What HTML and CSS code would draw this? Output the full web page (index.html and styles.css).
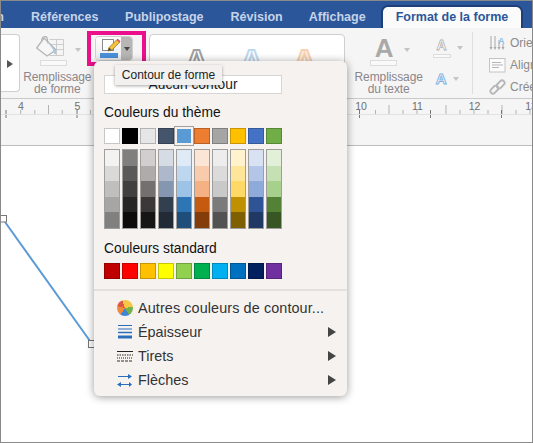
FILE: index.html
```html
<!DOCTYPE html>
<html lang="fr">
<head>
<meta charset="utf-8">
<title>Contour de forme</title>
<link rel="stylesheet" href="styles.css">
</head>
<body>
<div class="app">
  <nav class="tabs">
    <span class="tab tab-clip"><span>n</span></span>
    <span class="tab tab-ref">Références</span>
    <span class="tab tab-pub">Publipostage</span>
    <span class="tab tab-rev">Révision</span>
    <span class="tab tab-aff">Affichage</span>
    <span class="tab tab-active">Format de la forme</span>
  </nav>

  <section class="ribbon">
    <div class="gallery-end"><span class="play"></span></div>

    <div class="group fill-group">
      <div class="icon-row">
        <svg class="bucket" width="30" height="24" viewBox="0 0 30 24">
          <path d="M13.500 3.500h14v16h-14M13.500 8.500h14M13.500 13.500h14M20.500 3.500v16" fill="none" stroke="#cdcdcd"/>
          <path d="M.7 12 8 2l12 12-9 6z" fill="#f6f6f6" stroke="#b5b5b5" stroke-width="1.300"/>
          <path d="M6 5C5 1 9-.5 11 1.500l1 6" fill="none" stroke="#b5b5b5" stroke-width="1.200"/>
          <path d="M13 8l6 5.500c1.500 2 1.500 4 .5 5-2-.5-2.500-3-2.500-5z" fill="#a9c8e6"/>
        </svg>
        <span class="caret caret-fill"></span>
      </div>
      <span class="bar bar-fill"></span>
      <span class="label">Remplissage<br>de forme</span>
    </div>

    <div class="contour-btn">
      <span class="contour-main">
        <svg width="22" height="22" viewBox="0 0 22 22">
          <rect x="2.500" y="1.500" width="11" height="11" fill="#fff" stroke="#8a8a8a"/>
          <path d="M8 13l1-3.500L17 1.500l3 2.500-8 8z" fill="#f5c33b" stroke="#8c6d1f" stroke-width=".7"/>
          <path d="M16.500 2l1.300-1.200 2.700 2.400-1.200 1.300z" fill="#d9546e"/>
          <path d="M8 13l1-3.500 2.500 2.300z" fill="#4a4a4a"/>
          <rect x="0" y="15" width="18" height="5" fill="#4a90d9"/>
        </svg>
      </span>
      <span class="contour-drop"><span class="caret caret-dark"></span></span>
    </div>

    <div class="gallery">
      <span class="big-a a-grey">A</span>
      <span class="big-a a-blue">A</span>
      <span class="big-a a-orange">A</span>
    </div>

    <div class="group text-group">
      <div class="icon-row">
        <span class="text-a">A</span>
        <span class="caret caret-text"></span>
      </div>
      <span class="bar bar-text"></span>
      <span class="label">Remplissage<br>du texte</span>
    </div>

    <div class="small-col">
      <div class="small-top">
        <div class="small-stack">
          <span class="mini-a mini-grey">A</span>
          <span class="bar bar-mini"></span>
        </div>
        <span class="caret"></span>
      </div>
      <div class="small-bottom">
        <span class="mini-a mini-blue">A</span>
        <span class="caret"></span>
      </div>
    </div>

    <div class="cmds">
      <div class="cmd cmd-first">
        <svg width="17" height="16" viewBox="0 0 17 16">
          <path d="M2 1v12M6 1v12M10 5v8M14 9v4" stroke="#a8a8a8" fill="none"/>
          <path d="M.5 12l1.500 3 1.500-3zM4.500 12l1.500 3 1.500-3zM8.500 12l1.500 3 1.500-3zM12.500 12l1.500 3 1.500-3z" fill="#a8a8a8"/>
          <text x="9" y="9" class="orient-a">A</text>
        </svg>
        <span>Orientation</span>
      </div>
      <div class="cmd">
        <svg width="17" height="15" viewBox="0 0 17 15">
          <rect x=".5" y=".5" width="15.500" height="13.500" fill="#fbfbfb" stroke="#c4c4c4"/>
          <path d="M3 4.500h9M3 7h11M3 9.500h7" stroke="#b5b5b5" fill="none"/>
        </svg>
        <span>Aligner le texte</span>
      </div>
      <div class="cmd">
        <svg width="17" height="16" viewBox="0 0 17 16">
          <g fill="none" stroke="#b5b5b5" stroke-width="1.800">
            <rect x="-4" y="-2.500" width="9" height="5" rx="2.500" transform="translate(5 11) rotate(-45)"/>
            <rect x="-5" y="-2.500" width="9" height="5" rx="2.500" transform="translate(12 5) rotate(-45)"/>
          </g>
        </svg>
        <span>Créer un lien</span>
      </div>
    </div>
  </section>

  <section class="ruler">
    <svg class="ruler-svg" width="531" height="20" viewBox="0 0 531 20">
      <path class="tick" d="M19.700 11v4M33.800 11v4M47.500 6v9M61.200 11v4M89.500 11v4M374.500 11v4M388 6v9M402 11v4M416 11v4M445 6v9M459 11v4M473 11v4M487 11v4M501 6v9M515 11v4M529 11v4"/>
      <path class="tab-tick" d="M5 11v8M76 11v8M358.500 11v8M429.500 11v8M500.500 11v8"/>
      <path class="base" d="M0 15.500h531"/>
      <text class="ruler-num" x="20" y="11">4</text>
      <text class="ruler-num" x="76.500" y="11">5</text>
      <text class="ruler-num" x="360" y="11">10</text>
      <text class="ruler-num" x="416.500" y="11">11</text>
      <text class="ruler-num" x="473.500" y="11">12</text>
      <text class="ruler-num" x="530" y="11">13</text>
    </svg>
  </section>

  <main class="canvas">
    <svg class="shape" width="100" height="140" viewBox="0 0 100 140">
      <path d="M4 8 89 127" stroke="#5b9bd5" stroke-width="2" fill="none"/>
      <rect x="-.5" y="1.500" width="6" height="6.500" fill="#fff" stroke="#777"/>
      <rect x="87.500" y="126.500" width="6" height="7" fill="#fff" stroke="#777"/>
    </svg>
  </main>

  <div class="highlight"></div>

  <div class="menu">
    <button class="none-btn">Aucun contour</button>

    <h3 class="heading heading-theme">Couleurs du thème</h3>
    <div class="swatches">
      <span class="swatch" style="background:#ffffff"></span>
      <span class="swatch" style="background:#000000"></span>
      <span class="swatch" style="background:#e7e6e6"></span>
      <span class="swatch" style="background:#44546a"></span>
      <span class="swatch selected" style="background:#5b9bd5"></span>
      <span class="swatch" style="background:#ed7d31"></span>
      <span class="swatch" style="background:#a5a5a5"></span>
      <span class="swatch" style="background:#ffc000"></span>
      <span class="swatch" style="background:#4472c4"></span>
      <span class="swatch" style="background:#70ad47"></span>
    </div>
    <div class="shades">
      <div class="col"><i style="background:#f2f2f2"></i><i style="background:#d9d9d9"></i><i style="background:#bfbfbf"></i><i style="background:#a6a6a6"></i><i style="background:#808080"></i></div>
      <div class="col"><i style="background:#7f7f7f"></i><i style="background:#595959"></i><i style="background:#404040"></i><i style="background:#262626"></i><i style="background:#0d0d0d"></i></div>
      <div class="col"><i style="background:#d0cece"></i><i style="background:#aeabab"></i><i style="background:#757070"></i><i style="background:#3a3838"></i><i style="background:#171616"></i></div>
      <div class="col"><i style="background:#d6dce4"></i><i style="background:#adb9ca"></i><i style="background:#8496b0"></i><i style="background:#323f4f"></i><i style="background:#222a35"></i></div>
      <div class="col"><i style="background:#deebf6"></i><i style="background:#bdd7ee"></i><i style="background:#9dc3e6"></i><i style="background:#2e75b5"></i><i style="background:#1e4e79"></i></div>
      <div class="col"><i style="background:#fbe5d5"></i><i style="background:#f7cbac"></i><i style="background:#f4b183"></i><i style="background:#c55a11"></i><i style="background:#843c0b"></i></div>
      <div class="col"><i style="background:#ededed"></i><i style="background:#dbdbdb"></i><i style="background:#c9c9c9"></i><i style="background:#7b7b7b"></i><i style="background:#525252"></i></div>
      <div class="col"><i style="background:#fff2cc"></i><i style="background:#fee599"></i><i style="background:#ffd965"></i><i style="background:#bf9000"></i><i style="background:#7f6000"></i></div>
      <div class="col"><i style="background:#d9e2f3"></i><i style="background:#b4c6e7"></i><i style="background:#8eaadb"></i><i style="background:#2f5496"></i><i style="background:#1f3864"></i></div>
      <div class="col"><i style="background:#e2efd9"></i><i style="background:#c5e0b3"></i><i style="background:#a8d08d"></i><i style="background:#538135"></i><i style="background:#375623"></i></div>
    </div>

    <h3 class="heading heading-std">Couleurs standard</h3>
    <div class="swatches">
      <span class="swatch" style="background:#c00000"></span>
      <span class="swatch" style="background:#ff0000"></span>
      <span class="swatch" style="background:#ffc000"></span>
      <span class="swatch" style="background:#ffff00"></span>
      <span class="swatch" style="background:#92d050"></span>
      <span class="swatch" style="background:#00b050"></span>
      <span class="swatch" style="background:#00b0f0"></span>
      <span class="swatch" style="background:#0070c0"></span>
      <span class="swatch" style="background:#002060"></span>
      <span class="swatch" style="background:#7030a0"></span>
    </div>

    <hr class="sep">

    <ul class="items">
      <li class="item">
        <span class="item-icon"><span class="wheel"></span></span>
        <span class="item-text item-wide">Autres couleurs de contour...</span>
      </li>
      <li class="item">
        <span class="item-icon">
          <svg width="16" height="16" viewBox="0 0 16 16"><path d="M1 1.500h14M1 5h14" stroke="#2a6ebb" fill="none"/><path d="M1 8.500h14" stroke="#2a6ebb" stroke-width="1.500" fill="none"/><path d="M1 13h14" stroke="#2a6ebb" stroke-width="3" fill="none"/></svg>
        </span>
        <span class="item-text">Épaisseur</span>
        <span class="arrow"></span>
      </li>
      <li class="item">
        <span class="item-icon">
          <svg width="16" height="12" viewBox="0 0 16 12"><path d="M0 1.500h16" stroke="#222" fill="none"/><path d="M0 5h16" stroke="#222" stroke-dasharray="1.500 1" fill="none"/><path d="M0 8h16" stroke="#222" stroke-dasharray="1 1" fill="none"/><path d="M0 11h16" stroke="#333" stroke-dasharray="3 1" fill="none"/></svg>
        </span>
        <span class="item-text">Tirets</span>
        <span class="arrow"></span>
      </li>
      <li class="item">
        <span class="item-icon">
          <svg width="16" height="15" viewBox="0 0 16 15"><path d="M1 3.500h13M2 11.500h12" stroke="#2a6ebb" fill="none"/><path d="M11 1l4 2.500-4 2.500zM4 9l-4 2.500 4 2.500zM12 9l3 2.500-3 2.500z" fill="#2a6ebb"/></svg>
        </span>
        <span class="item-text">Flèches</span>
        <span class="arrow"></span>
      </li>
    </ul>
  </div>

  <div class="tooltip">Contour de forme</div>
</div>
</body>
</html>
```

FILE: styles.css
```css
* { box-sizing: border-box; }
html, body { margin: 0; padding: 0; background: #fff; }
body { font-family: "Liberation Sans", Arial, sans-serif; }

.app {
  position: relative;
  width: 533px;
  height: 443px;
  border: 1px solid #8a8a8a;
  display: flex;
  flex-direction: column;
  overflow: hidden;
  background: #fff;
}

/* Tabs */
.tabs {
  flex: none;
  height: 27px;
  background: #2b579a;
  display: flex;
  align-items: flex-end;
  font-size: 12.5px;
  font-weight: bold;
  color: #c6d3e8;
}
.tab { display: block; height: 20px; line-height: 18px; white-space: nowrap; }
.tab-clip { width: 3px; display: flex; justify-content: flex-end; overflow: hidden; }
.tab-ref { margin-left: 27px; }
.tab-pub { margin-left: 26.7px; }
.tab-rev { margin-left: 27px; }
.tab-aff { margin-left: 26px; }
.tab-active {
  margin-left: 17.3px;
  width: 138px;
  height: 21px;
  line-height: 20px;
  text-align: center;
  background: #fbfbfb;
  color: #2b579a;
  border-radius: 5px 5px 0 0;
  box-shadow: 0 0 0 2px #1f3f78;
}

/* Ribbon */
.ribbon {
  flex: none;
  height: 71px;
  background: #f6f5f5;
  border-bottom: 1px solid #c9c9c9;
  display: flex;
  align-items: flex-start;
  padding-top: 6px;
  overflow: hidden;
  position: relative;
}
.gallery-end {
  width: 20px;
  height: 58px;
  background: #fff;
  border: 1px solid #cfcfcf;
  border-left: 0;
  border-radius: 0 4px 4px 0;
  display: flex;
  align-items: center;
  justify-content: center;
}
.play {
  width: 0;
  height: 0;
  border-left: 6px solid #555;
  border-top: 4px solid transparent;
  border-bottom: 4px solid transparent;
  margin-top: 2px;
}
.group { display: flex; flex-direction: column; align-items: center; }
.icon-row { display: flex; align-items: center; position: relative; }
.label {
  font-size: 12px;
  line-height: 12px;
  color: #8b868b;
  text-align: center;
  letter-spacing: -.1px;
}
.caret {
  display: block;
  width: 0;
  height: 0;
  border-top: 4px solid #c4c4c4;
  border-left: 3.5px solid transparent;
  border-right: 3.5px solid transparent;
}
.bar { display: block; border: 1px solid #dcdcdc; background: #f9f9f9; }

.fill-group { width: 68px; margin-left: 3px; }
.fill-group .icon-row { height: 24px; width: 60px; margin-top: 2px; }
.bucket { margin-left: 9px; flex: none; }
.caret-fill { margin-left: 9px; margin-top: 4px; }
.bar-fill { width: 27px; height: 6px; margin: 0 8px 5px 0; }

.contour-btn {
  margin-left: 4px;
  margin-top: 2px;
  width: 39px;
  height: 25px;
  display: flex;
  border: 1px solid #cfcfcf;
  border-radius: 4px;
  overflow: hidden;
}
.contour-main {
  width: 25px;
  padding: 1px 0 0 4px;
  background: linear-gradient(#fefefe, #ececec);
}
.contour-drop {
  flex: 1;
  background: #b7b6b4;
  display: flex;
  align-items: center;
  justify-content: center;
}
.caret-dark { border-top-color: #444; }

.gallery {
  margin-left: 16px;
  width: 202px;
  height: 58px;
  background: #fff;
  border: 1px solid #cfcfcf;
  border-radius: 4px;
  display: flex;
  padding: 7px 0 0 35px;
}
.big-a {
  font-size: 32px;
  line-height: 38px;
  font-weight: bold;
  color: transparent;
}
.a-grey { color: #fff; -webkit-text-stroke: 2px #a0a0a0; width: 55px; }
.a-blue { color: #fff; -webkit-text-stroke: 2px #bcd8ef; width: 53px; }
.a-orange { color: #fdeee2; -webkit-text-stroke: 2px #f8d0b0; }

.text-group { width: 66px; margin-left: 11px; }
.text-group .icon-row { height: 24px; width: 60px; margin-top: 2px; justify-content: flex-start; }
.text-a {
  font-size: 26px;
  font-weight: bold;
  line-height: 24px;
  color: #a9a9a9;
  margin-left: 16px;
}
.caret-text { margin-left: 11px; margin-top: 4px; }
.bar-text { width: 27px; height: 6px; margin: 0 11px 5px 0; }

.small-col { width: 44px; margin-left: 11px; }
.small-top { display: flex; align-items: flex-start; gap: 6px; }
.small-stack { display: flex; flex-direction: column; align-items: center; width: 18px; }
.small-top .caret { margin-top: 12px; }
.mini-a {
  font-size: 14px;
  font-weight: bold;
  line-height: 18px;
  color: #fff;
}
.mini-grey { -webkit-text-stroke: .8px #b5b5b5; margin-top: 2px; }
.mini-blue { -webkit-text-stroke: 1px #7fb4e3; font-size: 15px; margin-left: 3px; margin-right: 6px; }
.bar-mini { width: 18px; height: 4px; }
.small-bottom { display: flex; align-items: center; margin-top: 12px; }

.cmds {
  margin-left: -3px;
  align-self: stretch;
  margin-top: -2px;
  height: 62px;
  border-left: 1px solid #dedede;
  padding-left: 16px;
  display: flex;
  flex-direction: column;
  width: 60px;
  gap: 6px;
  flex: none;
}
.cmd {
  display: flex;
  align-items: center;
  gap: 4px;
  font-size: 12px;
  line-height: 16px;
  height: 16px;
  color: #8b8b8b;
  white-space: nowrap;
}
.cmd svg { flex: none; }
.cmd-first { margin-top: 3px; }
.orient-a { font-size: 9px; font-weight: bold; fill: #8fbde6; font-family: "Liberation Sans", Arial, sans-serif; }

/* Ruler */
.ruler {
  flex: none;
  height: 47px;
  background: #f5f5f5;
  border-bottom: 1px solid #bdbdbd;
}
.ruler-svg { display: block; }
.tick { stroke: #b3b3b3; fill: none; }
.tab-tick { stroke: #777; fill: none; }
.base { stroke: #e2e2e2; fill: none; }
.ruler-num { font-size: 10.5px; fill: #6e6e6e; text-anchor: middle; font-family: "Liberation Sans", Arial, sans-serif; }

/* Canvas */
.canvas { flex: 1; position: relative; background: #fff; }
.shape { position: absolute; left: 0; top: 68px; overflow: visible; }

/* Overlays */
.highlight {
  position: absolute;
  left: 86px;
  top: 30px;
  width: 59px;
  height: 35px;
  border: 4px solid #ec0f8c;
}
.menu {
  position: absolute;
  left: 93px;
  top: 60px;
  width: 253px;
  height: 335px;
  background: #f6f2f0;
  border-radius: 6px;
  box-shadow: 0 1px 9px rgba(0, 0, 0, .4);
  padding: 14px 0 0 10px;
}
.none-btn {
  display: block;
  width: 178px;
  height: 19px;
  padding: 0;
  background: #fff;
  border: 1px solid #d8d6d4;
  font: 13.8px/17px "Liberation Sans", Arial, sans-serif;
  color: #222;
  text-align: center;
}
.heading {
  margin: 0;
  font-size: 13.8px;
  font-weight: normal;
  line-height: 16px;
  color: #111;
}
.heading-theme { margin-top: 11px; margin-bottom: 7px; }
.heading-std { margin-top: 12px; margin-bottom: 6px; }
.swatches { display: flex; gap: 2px; height: 16px; }
.swatch {
  display: block;
  width: 16px;
  height: 16px;
  border: 1px solid rgba(0, 0, 0, .22);
}
.selected { outline: 1px solid #a0a0a0; outline-offset: 1px; border-color: #f6f2f0; }
.shades { display: flex; gap: 2px; margin-top: 5px; }
.col {
  width: 16px;
  height: 80px;
  border: 1px solid rgba(90, 90, 90, .55);
  display: flex;
  flex-direction: column;
}
.col i { display: block; flex: 1; }
.sep {
  margin: 10px 0 0 -10px;
  height: 2px;
  border: 0;
  background: #e4e0de;
}
.items { list-style: none; margin: 5px 0 0; padding: 0; }
.item {
  height: 24px;
  display: flex;
  align-items: center;
  font-size: 14.4px;
  color: #333;
}
.item-icon {
  width: 16px;
  margin-left: 13px;
  display: flex;
  align-items: center;
  justify-content: center;
}
.item-icon svg { display: block; }
.item-text { margin-left: 5px; flex: 1; white-space: nowrap; }
.item-wide { letter-spacing: .1px; }
.wheel {
  display: block;
  width: 16px;
  height: 16px;
  border-radius: 50%;
  background: conic-gradient(#f6c644 0 80deg, #76b04a 80deg 150deg, #3f85d6 150deg 215deg, #f08a3a 215deg 285deg, #df5545 285deg 340deg, #f6c644 340deg);
}
.arrow {
  width: 0;
  height: 0;
  margin-right: 11px;
  border-left: 8px solid #444;
  border-top: 5px solid transparent;
  border-bottom: 5px solid transparent;
}
.tooltip {
  position: absolute;
  left: 114px;
  top: 64px;
  width: 107px;
  height: 20px;
  background: #f2f1f0;
  box-shadow: 0 1px 3px rgba(0, 0, 0, .35);
  font-size: 12px;
  line-height: 20px;
  text-align: center;
  color: #222;
  white-space: nowrap;
}
```
